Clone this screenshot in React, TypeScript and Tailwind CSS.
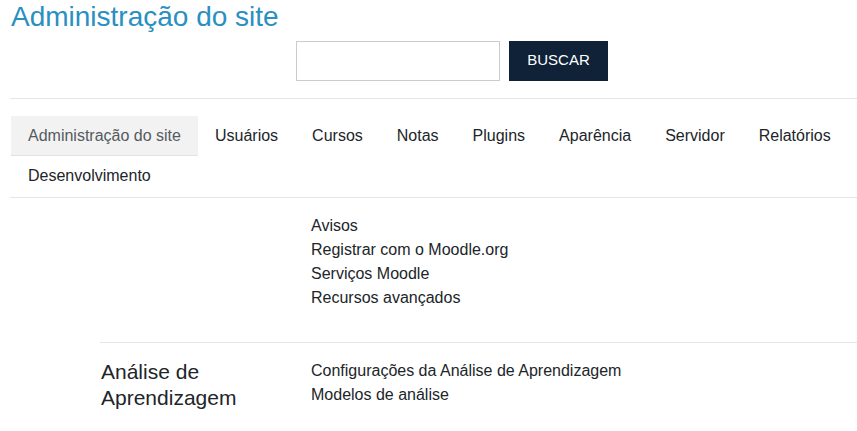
import React from "react";

const tabs = [
  "Administração do site",
  "Usuários",
  "Cursos",
  "Notas",
  "Plugins",
  "Aparência",
  "Servidor",
  "Relatórios",
  "Desenvolvimento",
];

export default function App() {
  return (
    <div className="min-h-screen bg-white pl-[10px] font-['Liberation_Sans',Arial,sans-serif] text-[#212529]">
      <h2 className="pl-px text-[28px] leading-[1.2] text-[#2a8fc1]">Administração do site</h2>
      <div className="ml-[286px] mt-[7px] flex gap-[9px]">
        <input
          className="h-[40px] w-[204px] border border-[#cccccc] bg-white px-2 text-[15px] outline-none"
          aria-label="Buscar"
        />
        <button className="h-[40px] w-[99px] bg-[#0f2238] text-[15px] text-white">BUSCAR</button>
      </div>
      <div className="mt-[17px] h-px bg-[#e6e6e6]" />
      <nav className="mt-[17px] flex flex-wrap border-b border-[#e6e6e6] pb-px pl-px">
        {tabs.map((t, i) => (
          <a
            key={t}
            className={
              i === 0
                ? "h-[40px] bg-[#f2f2f2] border-b border-[#e2e2e2] px-[17px] text-[16px] leading-[40px] text-[#555a5f]"
                : "h-[40px] px-[17px] text-[16px] leading-[40px] text-[#212529]"
            }
          >
            {t}
          </a>
        ))}
      </nav>
      <div className="ml-[90px]">
        <div className="grid grid-cols-[211px_1fr] pt-[16px] pb-[32px]">
          <div />
          <div className="flex flex-col text-[16px] leading-[24px]">
            <a>Avisos</a>
            <a>Registrar com o Moodle.org</a>
            <a>Serviços Moodle</a>
            <a>Recursos avançados</a>
          </div>
        </div>
        <div className="grid grid-cols-[211px_1fr] border-t border-[#e6e6e6] pt-[16px]">
          <h3 className="pl-px text-[21px] leading-[1.25]">Análise de Aprendizagem</h3>
          <div className="flex flex-col text-[16px] leading-[24px]">
            <a>Configurações da Análise de Aprendizagem</a>
            <a>Modelos de análise</a>
          </div>
        </div>
      </div>
    </div>
  );
}
